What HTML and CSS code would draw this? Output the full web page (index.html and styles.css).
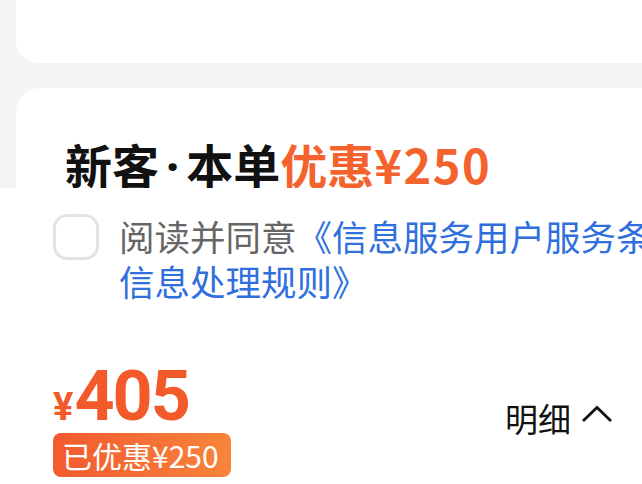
FILE: index.html
```html
<!DOCTYPE html>
<html lang="zh-CN">
<head>
<meta charset="utf-8">
<link rel="stylesheet" href="styles.css">
</head>
<body>
<div class="page">
  <div class="card-top"></div>
  <div class="card-main">
    <div class="title">新客<span class="dot">·</span>本单<span class="hl">优惠<span class="amt">¥250</span></span></div>
  </div>
  <div class="sheet">
    <div class="agree">
      <span class="check"></span>
      <p class="agree-text">阅读并同意<span class="link">《信息服务用户服务条款》《个人信息处理规则》</span></p>
    </div>
    <div class="footer">
      <div class="price-block">
        <div class="price"><span class="yen">¥</span><span class="num">405</span></div>
        <div class="badge">已优惠¥250</div>
      </div>
      <div class="detail">
        <span>明细</span>
        <svg class="chev" width="32" height="20" viewBox="0 0 32 20"><polyline points="2,17 16,3.5 30,17" fill="none" stroke="#111" stroke-width="2.8"/></svg>
      </div>
    </div>
  </div>
</div>
</body>
</html>
```
FILE: styles.css
```css
html, body {
  margin: 0;
  padding: 0;
}
body {
  width: 642px;
  height: 484px;
  overflow: hidden;
  background: #f3f4f6;
  font-family: "Noto Sans CJK SC", "Noto Sans", sans-serif;
}
.page {
  display: flex;
  flex-direction: column;
  width: 642px;
  height: 484px;
}
.card-top {
  margin-left: 16px;
  height: 63px;
  background: #fff;
  border-bottom-left-radius: 22px;
  flex: none;
}
.card-main {
  margin-left: 16px;
  margin-top: 25px;
  height: 100px;
  flex: none;
  background: #fff;
  border-top-left-radius: 24px;
  overflow: hidden;
  padding-left: 49px;
  box-sizing: border-box;
  padding-top: 52px;
}
.title {
  font-size: 47px;
  line-height: 47px;
  font-weight: 700;
  color: #111;
  white-space: nowrap;
}
.dot {
  font-family: "Noto Sans", sans-serif;
  margin: 0 7px;
}
.hl {
  color: #f4622e;
}
.amt {
  letter-spacing: 1.5px;
}
.sheet {
  flex: 1;
  background: #fff;
  padding: 26px 0 0 53px;
  box-sizing: border-box;
}
.agree {
  display: flex;
  align-items: flex-start;
  gap: 20px;
}
.check {
  flex: none;
  width: 46px;
  height: 46px;
  box-sizing: border-box;
  border: 3px solid #e3e3e5;
  border-radius: 14px;
}
.agree-text {
  flex: none;
  width: 716px;
  margin: -1px 0 0 0;
  font-size: 35.5px;
  line-height: 45px;
  color: #666;
}
.link {
  color: #2f6fde;
}
.footer {
  display: flex;
  justify-content: space-between;
  align-items: center;
  padding-right: 29px;
  margin-top: 58px;
}
.price {
  display: flex;
  align-items: baseline;
  height: 70px;
  color: #f25a2a;
  font-family: Roboto, "Noto Sans", sans-serif;
  font-weight: 700;
}
.yen {
  font-size: 38px;
  line-height: 1;
  margin-right: 1px;
}
.num {
  font-size: 70px;
  line-height: 70px;
  letter-spacing: -2px;
}
.badge {
  margin-top: 2px;
  width: 178px;
  height: 44px;
  box-sizing: border-box;
  border-radius: 8px;
  background: linear-gradient(90deg, #f25a30, #f8843a);
  color: #fff;
  font-size: 30px;
  line-height: 44px;
  padding-left: 9px;
  white-space: nowrap;
}
.detail {
  display: flex;
  align-items: center;
  gap: 10px;
  font-size: 33px;
  color: #111;
  margin-top: -2px;
}
.chev {
  display: block;
  margin-top: -8px;
}
```
